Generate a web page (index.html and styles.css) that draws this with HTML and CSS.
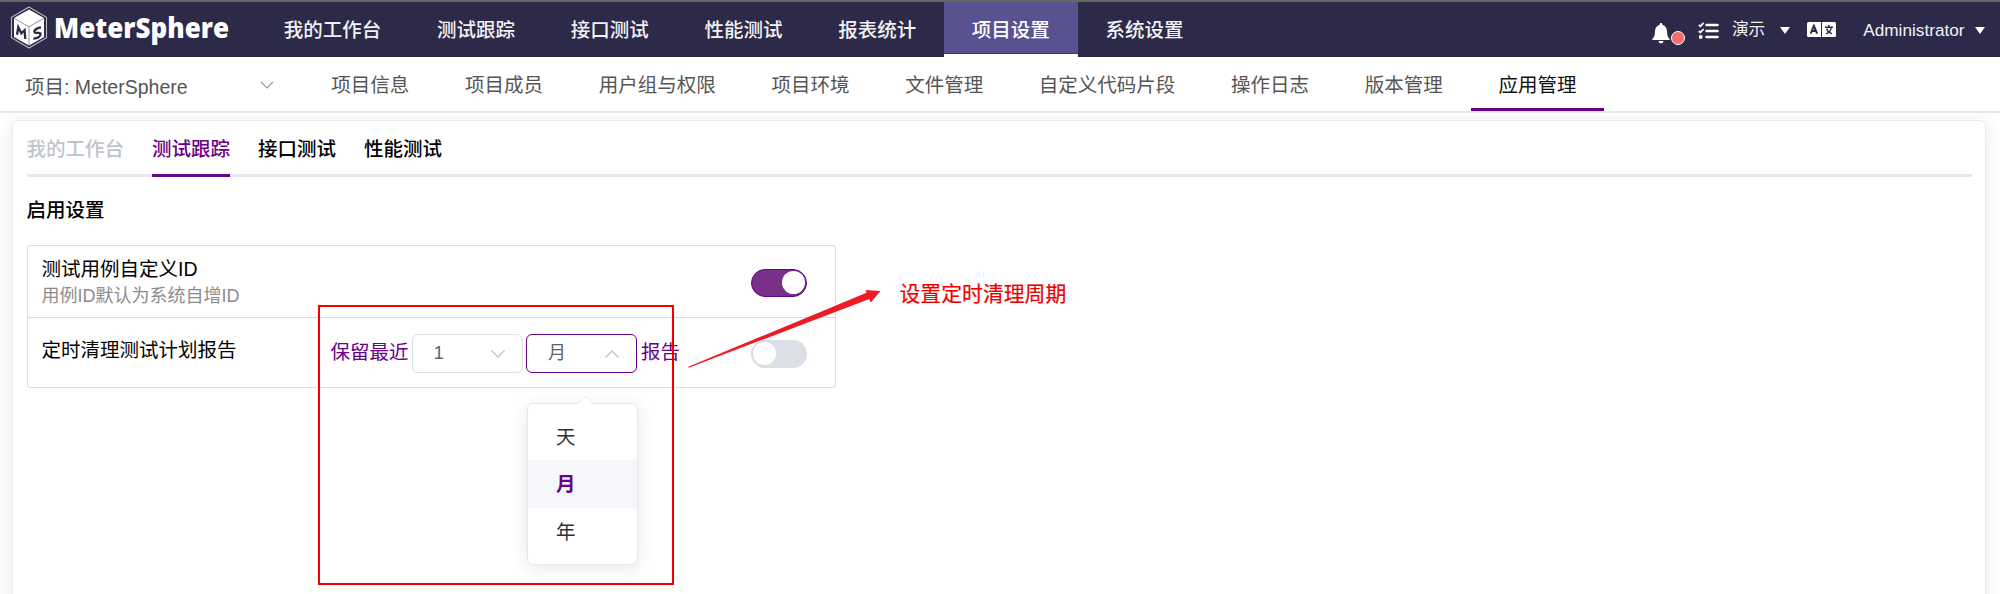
FILE: index.html
```html
<!DOCTYPE html>
<html lang="zh-CN">
<head>
<meta charset="utf-8">
<title>MeterSphere</title>
<link rel="stylesheet" href="styles.css">
</head>
<body>
<header class="topbar">
  <div class="brand">
    <svg class="brand-mark" width="38" height="44" viewBox="0 0 38 44">
      <path d="M19 1 36.500 11.200V31.800L19 42 1.500 31.800V11.200Z" fill="none" stroke="#b9b7c9" stroke-width="1.100"/>
      <path d="M19 3.500 34 12.100V30.900L19 39.500 4 30.900V12.100Z" fill="#fff"/>
      <path d="M4 12.100 19 20.900 34 12.100M19 20.900V39.500" fill="none" stroke="#85829b" stroke-width=".9"/>
      <path d="M7 28.800 8.300 21.200 11.300 27.300 14.600 24.200 15.300 33" fill="none" stroke="#2d2948" stroke-width="2.300"/>
      <path d="M31 21.400C27.500 21.500 23.800 24 24.500 26.200 25.200 28.200 30.200 25.500 30.600 28 30.800 30.500 27.200 32.800 23.300 32.600" fill="none" stroke="#2d2948" stroke-width="2.300"/>
    </svg>
    <svg class="brand-name" width="180" height="48" viewBox="0 0 180 48"><text x="1" y="32" textLength="175" lengthAdjust="spacingAndGlyphs">MeterSphere</text></svg>
  </div>
  <nav class="mainnav">
    <a class="item">我的工作台</a><a class="item">测试跟踪</a><a class="item">接口测试</a><a class="item">性能测试</a><a class="item">报表统计</a><a class="item active">项目设置</a><a class="item">系统设置</a>
  </nav>
  <div class="tools">
    <span class="bell">
      <svg width="18" height="21" viewBox="0 0 18 21" fill="#fff"><path d="M9 0C9.900 0 10.400.6 10.300 1.700 13.500 2.500 14.900 5 15 8.500 15.100 12.500 16 14.500 17.800 16.200V17H.2V16.200C2 14.500 2.900 12.500 3 8.500 3.100 5 4.500 2.500 7.700 1.700 7.600.6 8.100 0 9 0ZM6.500 18H11.500A2.500 2.500 0 0 1 6.500 18Z"/></svg>
      <i class="dot"></i>
    </span>
    <svg class="tasks" width="21" height="18" viewBox="0 0 21 18"><g fill="none" stroke="#fff" stroke-width="1.800"><path d="M.8 2.800 2.400 4.300 5.600.8M.8 9 2.400 10.500 5.600 7"/></g><circle cx="2.700" cy="15" r="2" fill="#fff"/><path d="M8.500 2.900H19.500M8.500 9H19.500M8.500 15.100H19.500" stroke="#fff" stroke-width="2.500" stroke-linecap="round"/></svg>
    <span class="workspace">演示</span>
    <i class="caret"></i>
    <svg class="lang" width="29" height="15" viewBox="0 0 29 15"><rect width="29" height="15" rx="1.500" fill="#fff"/><path d="M14.500 0V15" stroke="#2d2948" stroke-width="1"/><path d="M3.700 11.600 6.900 3.800 10.100 11.600M4.900 9H8.900" fill="none" stroke="#2d2948" stroke-width="2"/><path d="M18 5.200H26M22 3V5M19 11.800C22.300 10.500 23.800 8.500 24.300 5.500M19.700 6.500C20.300 9 22.500 11 25 11.600" fill="none" stroke="#2d2948" stroke-width="1.400"/></svg>
    <span class="user">Administrator</span>
    <i class="caret"></i>
  </div>
</header>
<div class="subbar">
  <div class="project"><span>项目: MeterSphere</span><svg width="14" height="8" viewBox="0 0 14 8"><path d="M1 1 7 7 13 1" fill="none" stroke="#999" stroke-width="1.100"/></svg></div>
  <nav class="subnav">
    <a class="item">项目信息</a><a class="item">项目成员</a><a class="item">用户组与权限</a><a class="item">项目环境</a><a class="item">文件管理</a><a class="item">自定义代码片段</a><a class="item">操作日志</a><a class="item">版本管理</a><a class="item active">应用管理</a>
  </nav>
</div>
<main class="page">
  <section class="card">
    <div class="tabs"><span class="tab disabled">我的工作台</span><span class="tab active">测试跟踪</span><span class="tab">接口测试</span><span class="tab">性能测试</span></div>
    <h2 class="title">启用设置</h2>
    <div class="settings">
      <div class="row">
        <div class="label">测试用例自定义ID<small>用例ID默认为系统自增ID</small></div>
        <span class="switch on"></span>
      </div>
      <div class="row second">
        <div class="label">定时清理测试计划报告</div>
        <div class="keep">
          <span>保留最近</span>
          <div class="select">1<svg width="16" height="10" viewBox="0 0 16 10"><path d="M1.500 1.500 8 8 14.500 1.500"/></svg></div>
          <div class="select open">月<svg width="16" height="10" viewBox="0 0 16 10"><path d="M1.500 8.500 8 2 14.500 8.500"/></svg>
            <div class="menu"><div class="option">天</div><div class="option selected">月</div><div class="option">年</div></div>
          </div>
          <span>报告</span>
        </div>
        <span class="switch"></span>
      </div>
    </div>
  </section>
</main>
<div class="marker"></div>
<svg class="arrow" width="200" height="90" viewBox="685 285 200 90"><path d="M688.300 366.800 866.500 292.800 865.500 290 880.500 291 870.800 302.500 869.300 299 688.700 367.800Z" fill="#ed1c24"/></svg>
<div class="note">设置定时清理周期</div>
</body>
</html>
```

FILE: styles.css
```css
* { box-sizing: border-box; }
body {
  margin: 0;
  height: 594px;
  overflow: hidden;
  position: relative;
  background: #fff;
  color: #000;
  font: 19.5px/28px "Liberation Sans", "Noto Sans CJK SC", sans-serif;
}
.topbar {
  height: 57px;
  display: flex;
  border-top: 2px solid #666;
  background: #2d2948;
  color: #f2f2f5;
}
.brand { width: 256px; padding: 4px 0 0 10px; display: flex; flex: none; }
.brand-name { margin-left: 5px; overflow: visible; }
.brand-name text { font: 900 29px "Open Sans", "Noto Sans", sans-serif; fill: #fff; }
.mainnav, .subnav { display: flex; flex: none; }
.mainnav .item { height: 55px; padding: 14px 27.85px 0; white-space: nowrap; font-weight: 500; }
.mainnav .active { background: linear-gradient(#595290 51px, #37308a 51px 52px, #fff 52px); color: #fff; }
.tools { margin-left: auto; padding-right: 15.500px; display: flex; align-items: flex-start; font-size: 16.7px; }
.bell { display: flex; margin-top: 21px; }
.dot { width: 14px; height: 14px; margin: 8px 0 0 1px; border: 1.4px solid #fff; border-radius: 50%; background: #f56c6c; }
.tasks { margin: 20px 0 0 13px; }
.workspace { margin: 14px 0 0 13px; font-weight: 400; }
.caret { margin: 25px 0 0 15px; border: 5.500px solid transparent; border-top: 7px solid #fff; border-bottom: 0; }
.lang { margin: 20px 0 0 17px; }
.user { margin: 14px 0 0 27px; font-size: 17.2px; }
.user + .caret { margin-left: 10px; }
.subbar { height: 56px; display: flex; border-bottom: 2px solid #e8e8e8; background: #fff; color: #555; }
.project { width: 303.500px; padding: 16px 29.500px 0 25px; display: flex; justify-content: space-between; flex: none; }
.project svg { margin-top: 8px; }
.subnav .item { height: 54px; padding: 14px 27.85px 0; border-bottom: 3px solid transparent; white-space: nowrap; }
.subnav .active { border-color: #690087; color: #111; }
.page { padding: 7px 14px 0 12px; height: 481px; overflow: hidden; }
.card {
  height: 520px;
  padding: 14px 13px 0 13.500px;
  border: 1.4px solid #e6ebf5;
  border-radius: 6px;
  box-shadow: 0 3px 17px rgba(0, 0, 0, .1);
  background: #fff;
}
.tabs { height: 42px; display: flex; gap: 28px; box-shadow: inset 0 -3px #e4e7ed; font-weight: 500; }
.tab { height: 42px; }
.tab.disabled { color: #c0c4cc; }
.tab.active { color: #690087; border-bottom: 3px solid #690087; }
.title { margin: 19px 0 21px; font-size: 19.5px; line-height: 28px; font-weight: 500; }
.settings { width: 809px; border: 1px solid #d8dce6; border-radius: 3px; }
.row { position: relative; height: 71px; padding: 9px 28px 0 14px; display: flex; justify-content: space-between; }
.row.second { height: 70px; border-top: 1px solid #d8dce6; }
.label { width: 289px; flex: none; }
.row.second .label { padding-top: 9px; }
.label small { display: block; font-size: 18px; line-height: 26px; color: #8c8c8c; }
.switch { width: 56px; height: 28px; margin-top: 14px; padding: 2px; border-radius: 14px; background: #dcdfe6; display: flex; flex: none; }
.row.second .switch { margin-top: 13px; }
.switch::after { content: ""; width: 23px; height: 23px; border-radius: 50%; background: #fff; }
.switch.on { background: #783089; border: 1.500px solid #690087; padding: 1px; justify-content: flex-end; }
.keep { display: flex; color: #690087; margin: 7px auto 0 0; }
.keep span { margin-top: 4px; }
.select {
  position: relative;
  width: 111px;
  height: 39px;
  margin-left: 3.300px;
  padding: 4px 16px 0 21px;
  display: flex;
  justify-content: space-between;
  border: 1.4px solid #dcdfe6;
  border-radius: 6px;
  color: #606266;
  font-size: 18px;
}
.select + span { margin-left: 4px; }
.select > svg { margin-top: 10px; fill: none; stroke: #c0c4cc; stroke-width: 1.300px; }
.select.open { border-color: #690087; }
.menu {
  position: absolute;
  left: 0;
  top: 68px;
  width: 111px;
  height: 162px;
  padding: 9px 0;
  border: 1.4px solid #e4e7ed;
  border-radius: 6px;
  background: #fff;
  box-shadow: 0 3px 17px rgba(0, 0, 0, .1);
}
.menu::before {
  content: "";
  position: absolute;
  left: 52px;
  top: -6px;
  width: 10px;
  height: 10px;
  background: #fff;
  border: solid #ebeef5;
  border-width: 1px 0 0 1px;
  transform: rotate(45deg);
}
.option { height: 47.3px; padding: 10px 28px 0; font-size: 19.5px; color: #303133; }
.option.selected { background: #f5f7fa; color: #690087; font-weight: 700; }
.marker { position: absolute; left: 318px; top: 305px; width: 356px; height: 280px; border: 2px solid #f20000; }
.arrow { position: absolute; left: 685px; top: 285px; }
.note { position: absolute; left: 899.500px; top: 280px; font-size: 20.85px; color: #f20000; white-space: nowrap; -webkit-text-stroke: .2px #f20000; }
```
